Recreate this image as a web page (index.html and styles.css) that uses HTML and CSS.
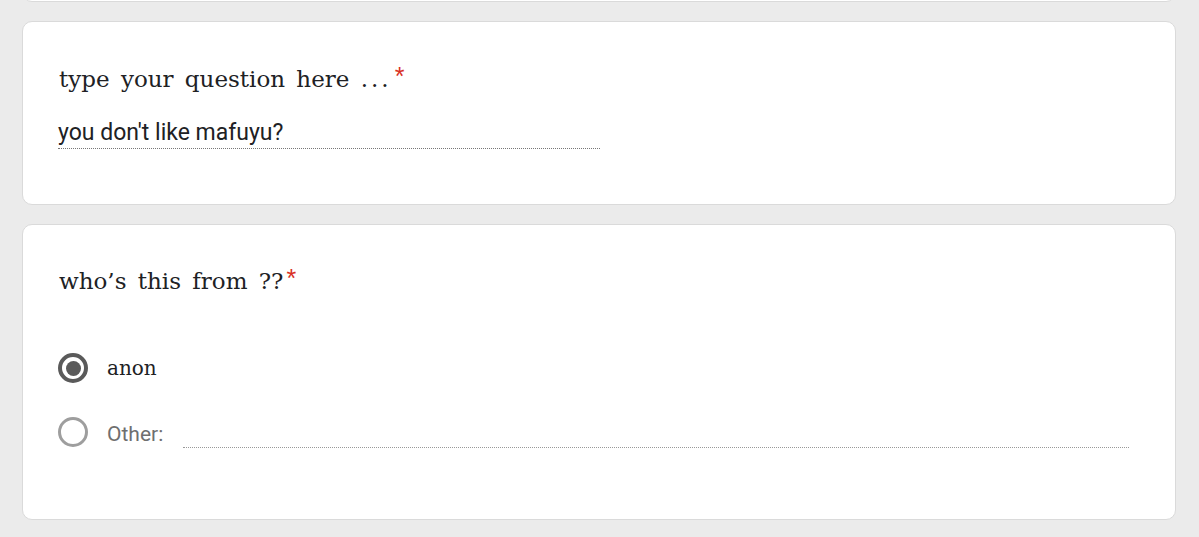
FILE: index.html
```html
<!DOCTYPE html>
<html>
<head>
<meta charset="utf-8">
<link rel="stylesheet" href="styles.css">
</head>
<body>
<div class="page">
  <div class="card card-prev"></div>
  <div class="card card-q1">
    <div class="title">type your question here <span class="dots">...</span><span class="req">*</span></div>
    <div class="answer">you don't like mafuyu?</div>
  </div>
  <div class="card card-q2">
    <div class="title">who’s this from ??<span class="req">*</span></div>
    <div class="options">
      <div class="option">
        <span class="radio checked"><span class="dot"></span></span>
        <span class="opt-label">anon</span>
      </div>
      <div class="option">
        <span class="radio"></span>
        <span class="other-label">Other:</span>
        <span class="other-line"></span>
      </div>
    </div>
  </div>
</div>
</body>
</html>
```
FILE: styles.css
```css
html, body {
  margin: 0;
  padding: 0;
  background: #ebebeb;
}
.page {
  display: flex;
  flex-direction: column;
  gap: 19px;
  padding: 0 23px 0 22px;
  margin-top: -20px;
}
.card {
  background: #fff;
  border: 1px solid #dadada;
  border-radius: 10px;
  box-sizing: border-box;
}
.card-prev {
  height: 22px;
}
.card-q1 {
  height: 184px;
  padding: 38px 36px 0 36px;
}
.card-q2 {
  height: 296px;
  padding: 37px 36px 0 36px;
}
.title {
  font-family: "DejaVu Serif", "Liberation Serif", serif;
  font-size: 23px;
  word-spacing: 4px;
  color: #202124;
  line-height: 32px;
}
.dots {
  letter-spacing: 3px;
}
.req {
  color: #d93025;
  margin-left: 3px;
  font-family: "Liberation Sans", sans-serif;
  font-size: 25px;
  vertical-align: 2px;
}
.answer {
  font-family: Roboto, sans-serif;
  font-size: 23px;
  color: #202124;
  margin-top: 24px;
  width: 542px;
  margin-left: -1px;
  line-height: 28px;
  padding-bottom: 1px;
  border-bottom: 1px dotted #777;
}
.options {
  margin-top: 56px;
  display: flex;
  flex-direction: column;
  gap: 34px;
}
.option {
  display: flex;
  align-items: center;
  height: 30px;
}
.radio {
  width: 30px;
  height: 30px;
  box-sizing: border-box;
  border-radius: 50%;
  border: 3px solid #9e9e9e;
  display: flex;
  align-items: center;
  justify-content: center;
  flex: none;
  margin-left: -1px;
}
.radio.checked {
  border: 4px solid #5a5a5a;
}
.dot {
  width: 15px;
  height: 15px;
  border-radius: 50%;
  background: #5a5a5a;
}
.opt-label {
  margin-left: 19px;
  font-family: "DejaVu Serif", "Liberation Serif", serif;
  font-size: 20px;
  color: #202124;
}
.other-label {
  margin-left: 19px;
  font-family: Roboto, sans-serif;
  font-size: 21px;
  color: #6f6f6f;
  margin-top: 4px;
}
.other-line {
  margin-left: 20px;
  width: 946px;
  align-self: flex-end;
  margin-bottom: -1px;
  border-bottom: 1px dotted #999;
}
```
